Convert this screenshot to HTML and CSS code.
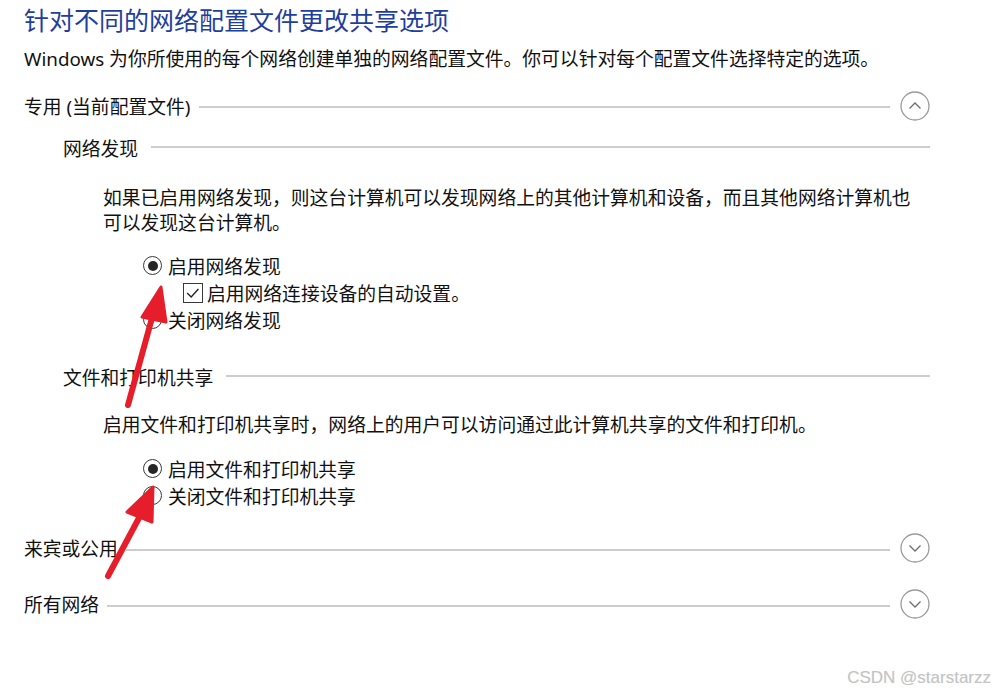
FILE: index.html
```html
<!DOCTYPE html>
<html lang="zh-CN">
<head>
<meta charset="utf-8">
<title>针对不同的网络配置文件更改共享选项</title>
<link rel="stylesheet" href="styles.css">
</head>
<body>
<div class="page">
  <h1 class="title">针对不同的网络配置文件更改共享选项</h1>
  <p class="desc">Windows 为你所使用的每个网络创建单独的网络配置文件。你可以针对每个配置文件选择特定的选项。</p>

  <div class="sec-head sec-open">
    <span class="sec-label">专用 (当前配置文件)</span>
    <span class="rule"></span>
    <span class="toggle"><svg viewBox="0 0 30 30" width="30" height="30"><circle cx="15" cy="15" r="14" fill="none" stroke="#9a9a9a" stroke-width="1.3"/><path d="M9.5 17.5 L15 12 L20.5 17.5" fill="none" stroke="#6e6e6e" stroke-width="1.3"/></svg></span>
  </div>

  <div class="sub">
    <div class="sub-head"><span class="sub-label">网络发现</span><span class="rule"></span></div>
    <p class="para">如果已启用网络发现，则这台计算机可以发现网络上的其他计算机和设备，而且其他网络计算机也<br>可以发现这台计算机。</p>
    <div class="opts">
      <div class="opt"><span class="radio on"></span><span>启用网络发现</span></div>
      <div class="opt chk-row"><span class="check"><svg viewBox="0 0 20 20" width="20" height="20"><path d="M3.5 10 L8 14.5 L16 5.5" fill="none" stroke="#222" stroke-width="1.5"/></svg></span><span>启用网络连接设备的自动设置。</span></div>
      <div class="opt"><span class="radio"></span><span>关闭网络发现</span></div>
    </div>
  </div>

  <div class="sub sub2">
    <div class="sub-head"><span class="sub-label">文件和打印机共享</span><span class="rule"></span></div>
    <p class="para para2">启用文件和打印机共享时，网络上的用户可以访问通过此计算机共享的文件和打印机。</p>
    <div class="opts opts2">
      <div class="opt"><span class="radio on"></span><span>启用文件和打印机共享</span></div>
      <div class="opt"><span class="radio"></span><span>关闭文件和打印机共享</span></div>
    </div>
  </div>

  <div class="sec-head sec-first-closed">
    <span class="sec-label">来宾或公用</span>
    <span class="rule"></span>
    <span class="toggle"><svg viewBox="0 0 30 30" width="30" height="30"><circle cx="15" cy="15" r="14" fill="none" stroke="#9a9a9a" stroke-width="1.3"/><path d="M9.5 12.5 L15 18 L20.5 12.5" fill="none" stroke="#6e6e6e" stroke-width="1.3"/></svg></span>
  </div>
  <div class="sec-head">
    <span class="sec-label">所有网络</span>
    <span class="rule"></span>
    <span class="toggle"><svg viewBox="0 0 30 30" width="30" height="30"><circle cx="15" cy="15" r="14" fill="none" stroke="#9a9a9a" stroke-width="1.3"/><path d="M9.5 12.5 L15 18 L20.5 12.5" fill="none" stroke="#6e6e6e" stroke-width="1.3"/></svg></span>
  </div>
</div>

<svg class="arrows" viewBox="0 0 1005 695" width="1005" height="695">
  <g fill="#e61e2b" stroke="#e61e2b" stroke-linecap="round" stroke-linejoin="round">
    <line x1="128" y1="405" x2="152" y2="318" stroke-width="6"/>
    <polygon points="161,287 142,317 166,322" stroke-width="3"/>
    <line x1="108" y1="576" x2="140" y2="516" stroke-width="6"/>
    <polygon points="153,487 127,512 152,522" stroke-width="3"/>
  </g>
</svg>
<div class="watermark">CSDN @starstarzz</div>
</body>
</html>
```
FILE: styles.css
```css
html, body {
  margin: 0;
  padding: 0;
  background: #ffffff;
}
body {
  width: 1005px;
  height: 695px;
  overflow: hidden;
  position: relative;
  font-family: "Noto Sans", "Noto Sans CJK SC", sans-serif;
  color: #111111;
}
.page {
  padding: 0 75px 0 24px;
}
.title {
  margin: 0;
  font-weight: normal;
  font-size: 25px;
  line-height: 40px;
  color: #1f3f9e;
  white-space: nowrap;
}
.desc {
  margin: 0;
  font-size: 18.8px;
  line-height: 38px;
  white-space: nowrap;
}
.sec-head {
  display: flex;
  align-items: center;
  height: 56px;
  font-size: 18.8px;
}
.sec-open {
  height: 55px;
}
.sec-head .rule {
  margin: 3px 10px 0 8px;
}
.sec-open .rule {
  margin-left: 9px;
}
.sec-label {
  white-space: nowrap;
}
.rule {
  flex: 1;
  height: 2px;
  background: #cdcdcd;
}
.toggle {
  width: 30px;
  height: 30px;
  display: flex;
}
.sub {
  padding-left: 39px;
  font-size: 18.8px;
}
.sub-head {
  display: flex;
  align-items: center;
  height: 30px;
}
.sub-head .rule {
  margin-left: 13px;
  margin-top: -2px;
}
.sub2 {
  margin-top: 29px;
}
.para {
  margin: 23px 0 0 40px;
  line-height: 25px;
  white-space: nowrap;
}
.para2 {
  margin-top: 21px;
}
.opts {
  margin: 16px 0 0 80px;
}
.opts2 {
  margin-top: 17px;
}
.opt {
  display: flex;
  align-items: center;
  height: 27px;
  gap: 6px;
  white-space: nowrap;
}
.chk-row {
  height: 27px;
  padding-left: 40px;
  gap: 4px;
}
.opts2 .opt {
  height: 27px;
}
.radio {
  width: 17px;
  height: 17px;
  border: 1.6px solid #3a3a3a;
  border-radius: 50%;
  display: flex;
  align-items: center;
  justify-content: center;
  flex: none;
}
.radio.on::after {
  content: "";
  width: 10px;
  height: 10px;
  border-radius: 50%;
  background: #262626;
}
.check {
  width: 18px;
  height: 18px;
  border: 1.4px solid #3a3a3a;
  display: flex;
  align-items: center;
  justify-content: center;
  flex: none;
}
.check svg {
  width: 18px;
  height: 18px;
}
.sec-first-closed {
  margin-top: 11px;
}
.arrows {
  position: absolute;
  left: 0;
  top: 0;
  pointer-events: none;
}
.watermark {
  position: absolute;
  right: 14px;
  top: 667px;
  font-family: "Liberation Sans", Arial, sans-serif;
  font-size: 17px;
  line-height: 22px;
  color: #c4c4c4;
  text-shadow: 0 0 1px #e8e8e8;
}
```
